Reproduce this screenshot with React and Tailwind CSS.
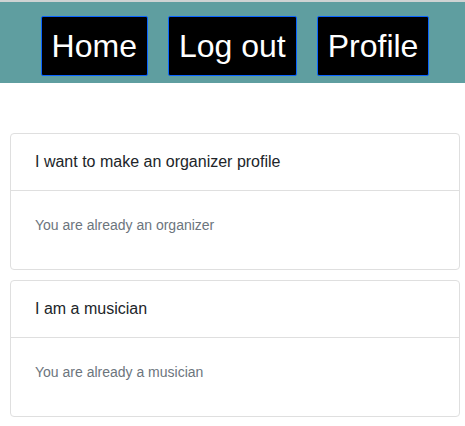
export default function App() {
  const links = ["Home", "Log out", "Profile"];

  const cards = [
    { title: "I want to make an organizer profile", body: "You are already an organizer" },
    { title: "I am a musician", body: "You are already a musician" },
  ];

  return (
    <div className="min-h-screen bg-white font-['Liberation_Sans',Arial,sans-serif]">
      <nav className="border-t-2 border-[#cfd3d3] bg-[#5f9ea0] pt-[14px] pb-[7px] pl-[5px] flex justify-center gap-[20px]">
        {links.map((l) => (
          <a
            key={l}
            href="#"
            className="h-[60px] flex items-center px-[10px] bg-black text-white text-[32px] leading-none border border-[#0a64ff] rounded-[2px]"
          >
            {l}
          </a>
        ))}
      </nav>

      <div className="pt-[50px]">
        {cards.map((c) => (
          <div
            key={c.title}
            className="w-[450px] ml-[10px] mb-[10px] border border-[#dfdfdf] rounded-[4px] bg-white"
          >
            <div className="px-[24px] py-4 text-[16px] leading-[24px] text-[#212529] border-b border-[#dfdfdf]">
              {c.title}
            </div>
            <div className="px-[24px] pt-6 pb-[33px] text-[14px] leading-[21px] text-[#6c757d]">
              {c.body}
            </div>
          </div>
        ))}
      </div>
    </div>
  );
}
